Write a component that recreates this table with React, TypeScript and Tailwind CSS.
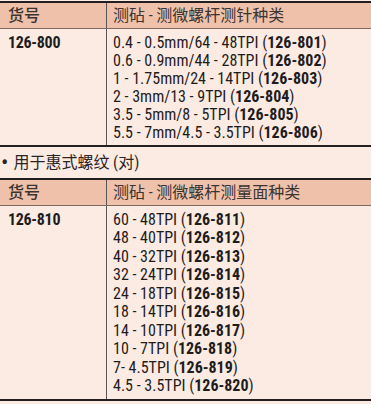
const table1 = [
  ["0.4 - 0.5mm/64 - 48TPI", "126-801"],
  ["0.6 - 0.9mm/44 - 28TPI", "126-802"],
  ["1 - 1.75mm/24 - 14TPI", "126-803"],
  ["2 - 3mm/13 - 9TPI", "126-804"],
  ["3.5 - 5mm/8 - 5TPI", "126-805"],
  ["5.5 - 7mm/4.5 - 3.5TPI", "126-806"],
];

const table2 = [
  ["60 - 48TPI", "126-811"],
  ["48 - 40TPI", "126-812"],
  ["40 - 32TPI", "126-813"],
  ["32 - 24TPI", "126-814"],
  ["24 - 18TPI", "126-815"],
  ["18 - 14TPI", "126-816"],
  ["14 - 10TPI", "126-817"],
  ["10 - 7TPI", "126-818"],
  ["7- 4.5TPI", "126-819"],
  ["4.5 - 3.5TPI", "126-820"],
];

function SpecTable({
  title,
  code,
  rows,
  leading,
}: {
  title: string;
  code: string;
  rows: string[][];
  leading: string;
}) {
  return (
    <div className="border-y-2 border-[#231f20]">
      {/* header */}
      <div className="flex h-[26px] items-center border-b border-[#7d6a60] bg-[#efc1aa] text-[16px] text-[#3a3432]">
        <div className="flex w-[107px] shrink-0 items-center self-stretch border-r border-[#5a5554] pl-2 font-medium">
          货号
        </div>
        <div className="pl-[6px]">{title}</div>
      </div>
      {/* body */}
      <div className="flex text-[#1f1c1d]">
        <div className="w-[107px] shrink-0 border-r border-[#5a5554] pl-2 pt-[5px] text-[16px] leading-[18px] font-bold tracking-[-0.3px]">
          {code}
        </div>
        <div className={`pl-[6px] pt-[5px] pb-[3px] text-[16px] ${leading}`}>
          {rows.map(([spec, no]) => (
            <div key={no}>
              {spec} (<span className="font-bold">{no}</span>)
            </div>
          ))}
        </div>
      </div>
    </div>
  );
}

export default function App() {
  return (
    <div className="h-[404px] w-[371px] bg-[#fbebe3] pt-px font-['Roboto_Condensed','Noto_Sans_CJK_SC',sans-serif]">
      <SpecTable
        title="测砧 - 测微螺杆测针种类"
        code="126-800"
        rows={table1}
        leading="leading-[18px]"
      />
      <div className="flex h-[31px] items-center gap-[5px] pl-[1px] text-[16px] text-[#2a2526]">
        <span className="text-[22px] leading-none">•</span>
        <span>用于惠式螺纹 (对)</span>
      </div>
      <SpecTable
        title="测砧 - 测微螺杆测量面种类"
        code="126-810"
        rows={table2}
        leading="leading-[18.45px]"
      />
    </div>
  );
}
